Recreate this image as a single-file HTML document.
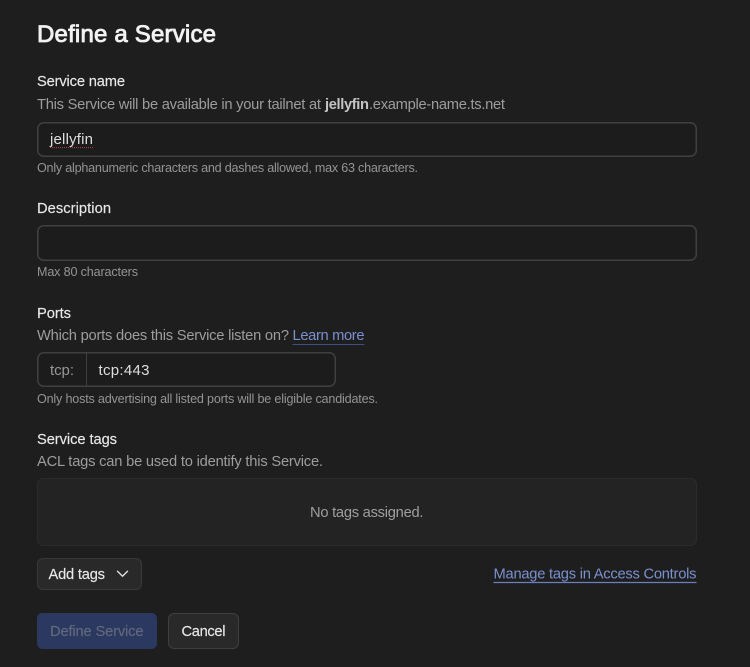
<!DOCTYPE html>
<html lang="en">
<head>
<meta charset="utf-8">
<title>Define a Service</title>
<style>
html,body{margin:0;padding:0;width:750px;height:667px;overflow:hidden;background:#1f1e1f}
svg{display:block}
text{font-family:"Liberation Sans",sans-serif;white-space:pre}
.label{font-size:14.7px;fill:#e8e8e8;stroke:#e8e8e8;stroke-width:.15px}
.desc{font-size:14.7px;fill:#9d9d9d}
.hint{font-size:12.6px;fill:#949494}
.val{font-size:15px;fill:#dedede}
.link{font-size:14.7px;fill:#7a90cf}
</style>
</head>
<body>
<svg width="750" height="667" viewBox="0 0 750 667" xmlns="http://www.w3.org/2000/svg">
<rect width="750" height="667" fill="#1f1e1f"/>
<text x="37" y="42" font-size="24" fill="#f2f2f2" stroke="#f2f2f2" stroke-width=".85" textLength="179" lengthAdjust="spacing">Define a Service</text>

<text class="label" x="37" y="86" textLength="88" lengthAdjust="spacing">Service name</text>
<text class="desc" x="37" y="109" textLength="284" lengthAdjust="spacing">This Service will be available in your tailnet at</text>
<text class="desc" x="325" y="109" font-weight="700" style="fill:#c4c4c4" textLength="44" lengthAdjust="spacing">jellyfin</text>
<text class="desc" x="369" y="109" textLength="136" lengthAdjust="spacing">.example-name.ts.net</text>
<rect x="37.75" y="122.75" width="658.5" height="33.5" rx="6" fill="#1d1c1d" stroke="#414041" stroke-width="1.5"/>
<text class="val" x="50" y="144" textLength="43" lengthAdjust="spacing">jellyfin</text>
<path d="M50 147.6H93" stroke="#a84848" stroke-width="1" stroke-dasharray="1 1"/>
<text class="hint" x="37" y="172" textLength="381" lengthAdjust="spacing">Only alphanumeric characters and dashes allowed, max 63 characters.</text>

<text class="label" x="37" y="213" textLength="74" lengthAdjust="spacing">Description</text>
<rect x="37.75" y="225.75" width="658.5" height="34.5" rx="6" fill="#1d1c1d" stroke="#414041" stroke-width="1.5"/>
<text class="hint" x="37" y="276" textLength="101" lengthAdjust="spacing">Max 80 characters</text>

<text class="label" x="37" y="318" textLength="34" lengthAdjust="spacing">Ports</text>
<text class="desc" x="37" y="340" textLength="252" lengthAdjust="spacing">Which ports does this Service listen on?</text>
<text class="link" x="292.5" y="340" textLength="72" lengthAdjust="spacing">Learn more</text>
<path d="M292.5 344.5H364.5" stroke="#3c4e82" stroke-width="1"/>
<rect x="37.75" y="352.75" width="297.5" height="33.5" rx="6" fill="#1d1c1d" stroke="#414041" stroke-width="1.5"/>
<path d="M86.5 353V386" stroke="#414041" stroke-width="1"/>
<text x="50" y="375" font-size="15" fill="#979797" textLength="24" lengthAdjust="spacing">tcp:</text>
<text class="val" x="98.5" y="375" textLength="51" lengthAdjust="spacing">tcp:443</text>
<text class="hint" x="37" y="403" textLength="341" lengthAdjust="spacing">Only hosts advertising all listed ports will be eligible candidates.</text>

<text class="label" x="37" y="444" textLength="80" lengthAdjust="spacing">Service tags</text>
<text class="desc" x="37" y="466" textLength="286" lengthAdjust="spacing">ACL tags can be used to identify this Service.</text>
<rect x="37.5" y="478.5" width="659" height="67" rx="6" fill="#242324" stroke="#2c2b2c" stroke-width="1"/>
<text x="310" y="517" font-size="14.7" fill="#9f9f9f" textLength="113.5" lengthAdjust="spacing">No tags assigned.</text>

<rect x="37.5" y="558.5" width="104" height="31" rx="5.5" fill="#2a292a" stroke="#3a393a" stroke-width="1"/>
<text x="48.5" y="579" font-size="14.7" fill="#e8e8e8" stroke="#e8e8e8" stroke-width=".15" textLength="56.5" lengthAdjust="spacing">Add tags</text>
<path d="M117.5 571.2L122.5 576.2L127.5 571.2" fill="none" stroke="#dedede" stroke-width="1.4" stroke-linecap="round" stroke-linejoin="round"/>
<text class="link" x="493.5" y="578.5" textLength="203" lengthAdjust="spacing">Manage tags in Access Controls</text>
<path d="M493.5 582.5H696.5" stroke="#6a80c0" stroke-width="1.2"/>

<rect x="37" y="613" width="120" height="36" rx="5.5" fill="#2b3860"/>
<text x="50" y="636" font-size="14.7" fill="#62687c" stroke="#62687c" stroke-width=".15" textLength="93.5" lengthAdjust="spacing">Define Service</text>
<rect x="168.5" y="613.5" width="70" height="35" rx="5.5" fill="#2a292a" stroke="#403f40" stroke-width="1"/>
<text x="181.5" y="636" font-size="14.7" fill="#e8e8e8" stroke="#e8e8e8" stroke-width=".15" textLength="44" lengthAdjust="spacing">Cancel</text>
</svg>
</body>
</html>
